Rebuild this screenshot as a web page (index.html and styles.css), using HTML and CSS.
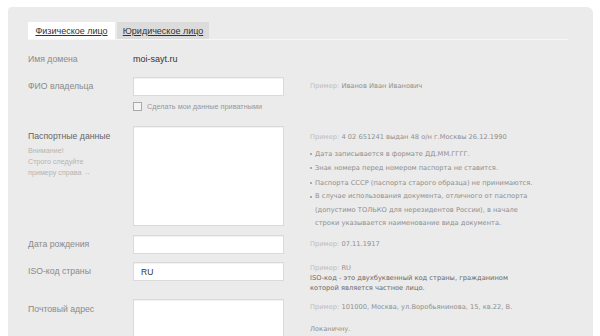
FILE: index.html
```html
<!DOCTYPE html>
<html lang="ru">
<head>
    <meta charset="UTF-8">
    <title>Регистрация домена</title>
    <link rel="stylesheet" href="styles.css">
</head>
<body>

<div class="panel">
    <div class="tabs">
        <a class="tab active">Физическое лицо</a>
        <a class="tab">Юридическое лицо</a>
    </div>

    <div class="row domain-row">
        <div class="label">Имя домена</div>
        <div class="domain">moi-sayt.ru</div>
    </div>

    <div class="row fio-row">
        <div class="label">ФИО владельца</div>
        <div class="field"><input type="text" class="text-input"></div>
        <div class="hint"><span class="ex">Пример:</span> Иванов Иван Иванович</div>
    </div>

    <div class="row check-row">
        <div class="label"></div>
        <label class="check"><span class="box"></span>Сделать мои данные приватными</label>
    </div>

    <div class="row passport-row">
        <div class="label">
            <div class="label-main">Паспортные данные</div>
            <div class="note">Внимание!<br>Строго следуйте<br>примеру справа &rarr;</div>
        </div>
        <div class="field"><textarea class="text-area"></textarea></div>
        <div class="hint">
            <div><span class="ex">Пример:</span> 4 02 651241 выдан 48 о/н г.Москвы 26.12.1990</div>
            <ul class="rules">
                <li>Дата записывается в формате ДД.ММ.ГГГГ.</li>
                <li>Знак номера перед номером паспорта не ставится.</li>
                <li>Паспорта СССР (паспорта старого образца) не принимаются.</li>
                <li>В случае использования документа, отличного от паспорта (допустимо ТОЛЬКО для нерезидентов России), в начале строки указывается наименование вида документа.</li>
            </ul>
        </div>
    </div>

    <div class="row date-row">
        <div class="label">Дата рождения</div>
        <div class="field"><input type="text" class="text-input"></div>
        <div class="hint"><span class="ex">Пример:</span> 07.11.1917</div>
    </div>

    <div class="row iso-row">
        <div class="label">ISO-код страны</div>
        <div class="field"><input type="text" class="text-input" value="RU"></div>
        <div class="hint">
            <div><span class="ex">Пример:</span> RU</div>
            <div class="iso-note">ISO-код - это двухбуквенный код страны, гражданином которой является частное лицо.</div>
        </div>
    </div>

    <div class="row post-row">
        <div class="label">Почтовый адрес</div>
        <div class="field"><textarea class="text-area"></textarea></div>
        <div class="hint">
            <div><span class="ex">Пример:</span> 101000, Москва, ул.Воробьянинова, 15, кв.22, В.</div>
            <div class="post-name">Локаничну.</div>
        </div>
    </div>
</div>

</body>
</html>
```

FILE: styles.css
```css
body {
    margin: 0;
    background-color: #fff;
    font-family: "Liberation Sans", Arial, sans-serif;
    height: 336px;
    overflow: hidden;
}
.panel {
    margin: 7px 0 0 8px;
    width: 565px;
    height: 329px;
    padding: 15px 0 0 20px;
    box-sizing: content-box;
    background-color: #ebebeb;
    border-radius: 4px 6px 0 0;
    overflow: hidden;
}
.tabs {
    display: flex;
    width: 540px;
    height: 17px;
    border-bottom: 1px solid #f7f7f7;
}
.tab {
    height: 17px;
    line-height: 18px;
    font-size: 9px;
    color: #333;
    text-decoration: underline;
    text-align: center;
    cursor: pointer;
}
.tab.active {
    width: 87px;
    background-color: #fff;
}
.tab:not(.active) {
    width: 92px;
    margin-left: 2px;
    background-color: #dcdcdc;
}
.row {
    display: flex;
    align-items: flex-start;
}
.label {
    width: 105px;
    flex-shrink: 0;
    font-size: 8.7px;
    line-height: 19px;
    color: #8a8a8a;
}
.field {
    width: 151px;
    flex-shrink: 0;
}
.hint {
    margin-left: 26px;
    width: 270px;
    font-family: "DejaVu Sans", Verdana, sans-serif;
    font-size: 6.7px;
    color: #8f8f8f;
}
.ex {
    color: #bdbdbd;
}
.text-input, .text-area {
    display: block;
    box-sizing: border-box;
    width: 151px;
    margin: 0;
    padding: 0 7px;
    border: 1px solid #dadada;
    background-color: #fff;
    box-shadow: inset 0 1px 1px rgba(0, 0, 0, 0.06);
    font-family: "Liberation Sans", Arial, sans-serif;
    font-size: 8.5px;
    color: #333;
    outline: none;
}
.text-input {
    height: 19px;
}
.text-area {
    height: 100px;
    resize: none;
}
.domain-row {
    margin-top: 12px;
    height: 14px;
}
.domain-row .label {
    line-height: 14px;
}
.domain {
    font-size: 9px;
    line-height: 14px;
    color: #333;
}
.fio-row {
    margin-top: 11px;
    height: 19px;
}
.fio-row .hint {
    line-height: 19px;
}
.check-row {
    margin-top: 5px;
    height: 11px;
}
.check {
    display: flex;
    align-items: center;
    height: 11px;
    font-size: 7.3px;
    color: #999;
}
.box {
    width: 7px;
    height: 7px;
    margin-right: 5px;
    border: 1px solid #aaa;
    background-color: #f4f4f4;
}
.passport-row {
    margin-top: 14px;
    height: 100px;
}
.label-main {
    margin-top: 1px;
    color: #666;
}
.note {
    margin-top: -1px;
    font-size: 7.2px;
    line-height: 11px;
    color: #b5b5b5;
}
.passport-row .hint {
    padding-top: 4px;
    line-height: 14.5px;
}
.rules {
    list-style: none;
    margin: 2px 0 0;
    padding: 0;
}
.rules li {
    position: relative;
    padding-left: 5px;
    line-height: 13.5px;
}
.rules li:nth-child(-n+3) {
    line-height: 14.5px;
}
.rules li::before {
    content: '';
    position: absolute;
    left: 0;
    top: 6px;
    width: 2px;
    height: 2px;
    background-color: #aaa;
}
.rules li:last-child {
    width: 225px;
}
.date-row {
    margin-top: 9px;
    height: 19px;
}
.date-row .hint {
    line-height: 18px;
}
.iso-row {
    margin-top: 8px;
    height: 19px;
}
.iso-row .hint {
    margin-top: 1px;
    line-height: 10px;
}
.iso-note {
    width: 220px;
    color: #6a6a6a;
}
.post-row {
    margin-top: 18px;
}
.post-row .label {
    line-height: 21px;
}
.post-row .hint {
    padding-top: 2px;
    line-height: 13px;
}
.post-name {
    margin-top: 9px;
}
```
